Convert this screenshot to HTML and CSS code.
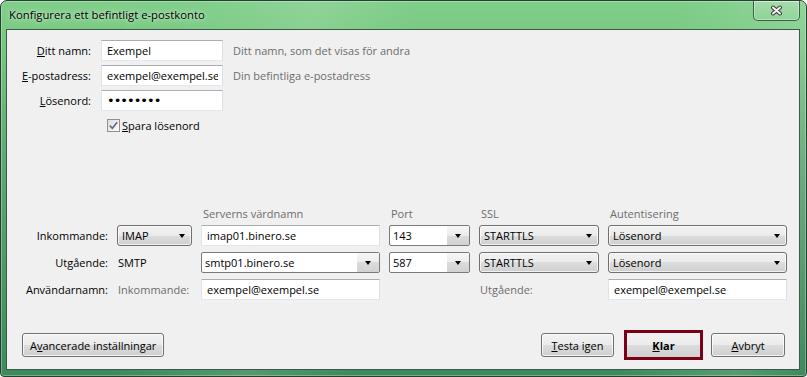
FILE: index.html
```html
<!DOCTYPE html>
<html lang="sv">
<head>
  <meta charset="UTF-8">
  <meta name="viewport" content="width=device-width, initial-scale=1.0">
  <title>Konfigurera ett befintligt e-postkonto</title>
  <link rel="stylesheet" href="styles.css">
</head>
<body>

<div class="window">
  <div class="titlebar">
    <span class="title">Konfigurera ett befintligt e-postkonto</span>
    <button class="close" type="button" aria-label="Stäng">
      <svg width="13" height="11" viewBox="0 0 13 11">
        <path d="M3 2.5 L10 8.5 M10 2.5 L3 8.5" stroke="#3c3c3c" stroke-width="4" stroke-linecap="round" fill="none"/>
        <path d="M3 2.5 L10 8.5 M10 2.5 L3 8.5" stroke="#f4f4f4" stroke-width="2" stroke-linecap="round" fill="none"/>
      </svg>
    </button>
  </div>

  <form class="client" id="accountForm">
    <div class="identity">
      <label class="lbl" for="name"><u>D</u>itt namn:</label>
      <input class="field" type="text" id="name" value="Exempel">
      <span class="hint">Ditt namn, som det visas för andra</span>

      <label class="lbl" for="email"><u>E</u>-postadress:</label>
      <input class="field" type="text" id="email" value="exempel@exempel.se">
      <span class="hint">Din befintliga e-postadress</span>

      <label class="lbl" for="password"><u>L</u>ösenord:</label>
      <input class="field secret" type="password" id="password" value="exempel1">
      <span></span>

      <span></span>
      <label class="remember">
        <span class="check">
          <svg width="11" height="11" viewBox="0 0 11 11">
            <path d="M1.8 5.6 L4.3 8.2 L9.2 2.2" fill="none" stroke="#5a6a86" stroke-width="1.6"/>
          </svg>
        </span>
        <span><u>S</u>para lösenord</span>
      </label>
      <span></span>
    </div>

    <div class="servers">
      <span></span>
      <span></span>
      <span class="head">Serverns värdnamn</span>
      <span class="head">Port</span>
      <span class="head">SSL</span>
      <span class="head">Autentisering</span>

      <span class="lbl">Inkommande:</span>
      <div class="select">IMAP<i class="arrow"></i></div>
      <input class="field" type="text" value="imap01.binero.se">
      <div class="combo"><input type="text" value="143"><span class="drop"><i class="arrow"></i></span></div>
      <div class="select">STARTTLS<i class="arrow"></i></div>
      <div class="select">Lösenord<i class="arrow"></i></div>

      <span class="lbl">Utgående:</span>
      <span class="plain">SMTP</span>
      <div class="combo"><input type="text" value="smtp01.binero.se"><span class="drop"><i class="arrow"></i></span></div>
      <div class="combo"><input type="text" value="587"><span class="drop"><i class="arrow"></i></span></div>
      <div class="select">STARTTLS<i class="arrow"></i></div>
      <div class="select">Lösenord<i class="arrow"></i></div>

      <span class="lbl">Användarnamn:</span>
      <span class="plain muted">Inkommande:</span>
      <input class="field" type="text" value="exempel@exempel.se">
      <span></span>
      <span class="plain muted">Utgående:</span>
      <input class="field" type="text" value="exempel@exempel.se">
    </div>

    <div class="actions">
      <button class="btn" type="button">A<u>v</u>ancerade inställningar</button>
      <button class="btn btn-retest" type="button"><u>T</u>esta igen</button>
      <button class="btn btn-default" type="submit"><u>K</u>lar</button>
      <button class="btn btn-cancel" type="button"><u>A</u>vbryt</button>
    </div>
  </form>
</div>

</body>
</html>
```

FILE: styles.css
```css
* {
  box-sizing: border-box;
}

body {
  margin: 0;
  font-family: "Open Sans", "Noto Sans", sans-serif;
  font-size: 11px;
  color: #000;
}

.window {
  width: 807px;
  height: 377px;
  display: flex;
  flex-direction: column;
  padding: 0 6px 6px 5px;
  border: 1px solid #23412e;
  border-radius: 7px 7px 4px 4px;
  background:
    linear-gradient(100deg, rgba(255, 255, 255, 0) 20%, rgba(255, 255, 255, 0.12) 36%, rgba(255, 255, 255, 0) 48%, rgba(255, 255, 255, 0) 78%, rgba(255, 255, 255, 0.14) 92%, rgba(255, 255, 255, 0) 100%),
    linear-gradient(180deg, #7fce89 0, #7aca84 30px, #5ea872 160px, #3d8a5b 100%);
  box-shadow: inset 0 0 0 1px rgba(255, 255, 255, 0.3);
}

/* title bar */

.titlebar {
  height: 28px;
  display: flex;
  justify-content: space-between;
  align-items: flex-start;
}

.title {
  padding: 6px 0 0 3px;
  line-height: 16px;
  font-size: 11.3px;
  text-shadow: 0 0 8px rgba(255, 255, 255, 0.8), 0 0 3px rgba(255, 255, 255, 0.6);
}

.close {
  width: 47px;
  height: 20px;
  padding: 0;
  display: flex;
  align-items: center;
  justify-content: center;
  border: 1px solid rgba(25, 55, 35, 0.75);
  border-top: 0;
  border-radius: 0 0 5px 5px;
  background: linear-gradient(rgba(255, 255, 255, 0.2), rgba(255, 255, 255, 0.05));
  box-shadow: inset 0 0 0 1px rgba(255, 255, 255, 0.35);
}

/* client area */

.client {
  flex: 1;
  margin: 0;
  display: flex;
  flex-direction: column;
  padding: 10px 14px 9px 0;
  background-color: #f0f0f0;
  border: 1px solid #3a5946;
}

.identity {
  display: grid;
  grid-template-columns: 84px 122px auto;
  grid-auto-rows: 21px;
  column-gap: 10px;
  row-gap: 4px;
  align-items: center;
}

.lbl {
  text-align: right;
  white-space: nowrap;
}

.hint,
.head,
.muted {
  color: #6d6d6d;
}

.field {
  height: 21px;
  width: 100%;
  padding: 0 4px 0 5px;
  font: inherit;
  color: #000;
  background-color: #fff;
  border: 1px solid;
  border-color: #abadb3 #dbdfe6 #e3e9ef #e2e3ea;
  outline: none;
}

.secret {
  font-family: "DejaVu Sans", sans-serif;
  font-size: 13px;
  letter-spacing: -1px;
}

.remember {
  display: flex;
  align-items: center;
  gap: 2px;
  padding-left: 6px;
}

.check {
  width: 13px;
  height: 13px;
  display: inline-flex;
  align-items: center;
  justify-content: center;
  border: 1px solid #8e8f8f;
  background: linear-gradient(135deg, #dcdcdc, #fdfdfd);
}

/* server settings */

.servers {
  margin-top: 67px;
  display: grid;
  grid-template-columns: 101px 75px 179px 81px 120px 179px;
  grid-template-rows: 16px 21px 21px 21px;
  column-gap: 9px;
  row-gap: 6px;
  align-items: center;
}

.head {
  align-self: end;
  line-height: 16px;
  margin-bottom: -3px;
  padding-left: 2px;
}

.plain {
  padding-left: 1px;
}

.select {
  height: 21px;
  display: flex;
  align-items: center;
  justify-content: space-between;
  padding: 0 6px 0 4px;
  border: 1px solid #707070;
  border-radius: 3px;
  background: linear-gradient(#f2f2f2 0, #ebebeb 50%, #dddddd 50%, #cfcfcf 100%);
  box-shadow: inset 0 0 0 1px rgba(255, 255, 255, 0.7);
}

.arrow {
  width: 0;
  height: 0;
  border-left: 3.5px solid transparent;
  border-right: 3.5px solid transparent;
  border-top: 4px solid #000;
}

.combo {
  height: 21px;
  display: flex;
  border: 1px solid #7a7a7a;
  border-radius: 2px;
  background-color: #fff;
}

.combo input {
  flex: 1;
  min-width: 0;
  padding: 0 0 0 3px;
  font: inherit;
  color: #000;
  border: none;
  background: transparent;
  outline: none;
}

.drop {
  width: 22px;
  display: flex;
  align-items: center;
  justify-content: center;
  background: linear-gradient(#f7f7f7, #ececec 50%, #dcdcdc 50%, #d2d2d2);
}

/* bottom buttons */

.actions {
  margin-top: auto;
  padding-left: 15px;
  display: flex;
  align-items: center;
}

.btn {
  height: 24px;
  padding: 0 7px;
  font: inherit;
  color: #000;
  border: 1px solid #707070;
  border-radius: 3px;
  background: linear-gradient(#f2f2f2 0, #ebebeb 50%, #dddddd 50%, #cfcfcf 100%);
  box-shadow: inset 0 0 0 1px rgba(255, 255, 255, 0.75);
}

.btn-retest {
  width: 73px;
  margin-left: auto;
}

.btn-default {
  width: 79px;
  height: 30px;
  margin-left: 10px;
  font-weight: bold;
  border: 3px solid #7b0017;
  border-radius: 0;
  box-shadow: none;
}

.btn-cancel {
  width: 74px;
  margin-left: 8px;
}
```
